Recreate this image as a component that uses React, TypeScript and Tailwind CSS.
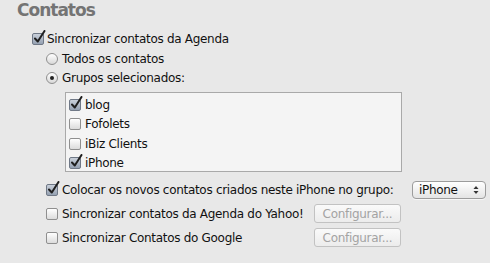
import React from "react";

const font = { fontFamily: '"DejaVu Sans", "Liberation Sans", sans-serif' };

function Check({ checked }: { checked?: boolean }) {
  return (
    <span className="relative inline-block w-[12px] h-[12px] shrink-0">
      <span
        className={
          checked
            ? "absolute inset-0 rounded-[2px] border border-[#6f7886] bg-gradient-to-b from-[#c9d0da] to-[#95a1b2]"
            : "absolute inset-0 rounded-[2px] border border-[#8f8f8f] bg-gradient-to-b from-[#ffffff] to-[#dcdcdc]"
        }
      />
      {checked && (
        <svg className="absolute left-[1px] top-[-3px]" width="13" height="14" viewBox="0 0 13 14">
          <path d="M2 8.5 L4.8 11.5 L11.5 1" fill="none" stroke="#1e1e1e" strokeWidth="2" strokeLinecap="round" strokeLinejoin="round" />
        </svg>
      )}
    </span>
  );
}

function Radio({ selected }: { selected?: boolean }) {
  return (
    <span className="relative inline-flex w-[12px] h-[12px] shrink-0 items-center justify-center rounded-full border border-[#8f8f8f] bg-gradient-to-b from-[#ffffff] to-[#d8d8d8]">
      {selected && <span className="w-[4px] h-[4px] rounded-full bg-[#222]" />}
    </span>
  );
}

function Row({ children, className = "" }: { children: React.ReactNode; className?: string }) {
  return <div className={"flex items-center " + className}>{children}</div>;
}

export default function App() {
  return (
    <div
      className="w-[490px] h-[263px] overflow-hidden bg-[#e8e8e8] text-[12px] text-[#111] tracking-[-0.3px]"
      style={font}
    >
      <div className="pl-[17px] text-[17px] leading-[21px] font-bold text-[#747474] tracking-[-1px]">Contatos</div>

      <Row className="mt-[8px] h-[20px] pl-[32px] gap-[3px]">
        <Check checked />
        <span>Sincronizar contatos da Agenda</span>
      </Row>
      <Row className="h-[19px] pl-[46px] gap-[4px]">
        <Radio />
        <span>Todos os contatos</span>
      </Row>
      <Row className="h-[19px] pl-[46px] gap-[4px]">
        <Radio selected />
        <span>Grupos selecionados:</span>
      </Row>

      <div className="ml-[65px] mt-[5px] w-[337px] h-[80px] border border-[#a9a9a9] bg-[#f4f4f4] pt-[2px] pl-[3px]">
        {[
          ["blog", true],
          ["Fofolets", false],
          ["iBiz Clients", false],
          ["iPhone", true],
        ].map(([label, c]) => (
          <Row key={label as string} className="h-[19.5px] gap-[4px]">
            <Check checked={c as boolean} />
            <span>{label as string}</span>
          </Row>
        ))}
      </div>

      <div className="pl-[46px] w-[486px] mt-[8px] flex flex-col gap-[5px]">
        <Row className="h-[19px] justify-between">
          <div className="flex items-center gap-[4px]">
            <Check checked />
            <span>Colocar os novos contatos criados neste iPhone no grupo:</span>
          </div>
          <div className="w-[74px] h-[18px] rounded-[4px] border border-[#9c9c9c] bg-gradient-to-b from-[#ffffff] to-[#e4e4e4] flex items-center justify-between pl-[6px] pr-[6px] shadow-[0_1px_0_rgba(255,255,255,0.6)]">
            <span className="text-[12px]">iPhone</span>
            <svg width="6" height="10" viewBox="0 0 6 10">
              <path d="M0.5 4 L3 1 L5.5 4 Z" fill="#333" />
              <path d="M0.5 6 L3 9 L5.5 6 Z" fill="#333" />
            </svg>
          </div>
        </Row>
        <Row className="h-[19px]">
          <div className="flex items-center gap-[4px] w-[268px]">
            <Check />
            <span>Sincronizar contatos da Agenda do Yahoo!</span>
          </div>
          <div className="w-[87px] h-[19px] rounded-[3px] border border-[#c2c2c2] bg-gradient-to-b from-[#fafafa] to-[#ececec] flex items-center justify-center text-[#a3a3a3]">
            Configurar...
          </div>
        </Row>
        <Row className="h-[19px]">
          <div className="flex items-center gap-[4px] w-[268px]">
            <Check />
            <span>Sincronizar Contatos do Google</span>
          </div>
          <div className="w-[87px] h-[19px] rounded-[3px] border border-[#c2c2c2] bg-gradient-to-b from-[#fafafa] to-[#ececec] flex items-center justify-center text-[#a3a3a3]">
            Configurar...
          </div>
        </Row>
      </div>
    </div>
  );
}
